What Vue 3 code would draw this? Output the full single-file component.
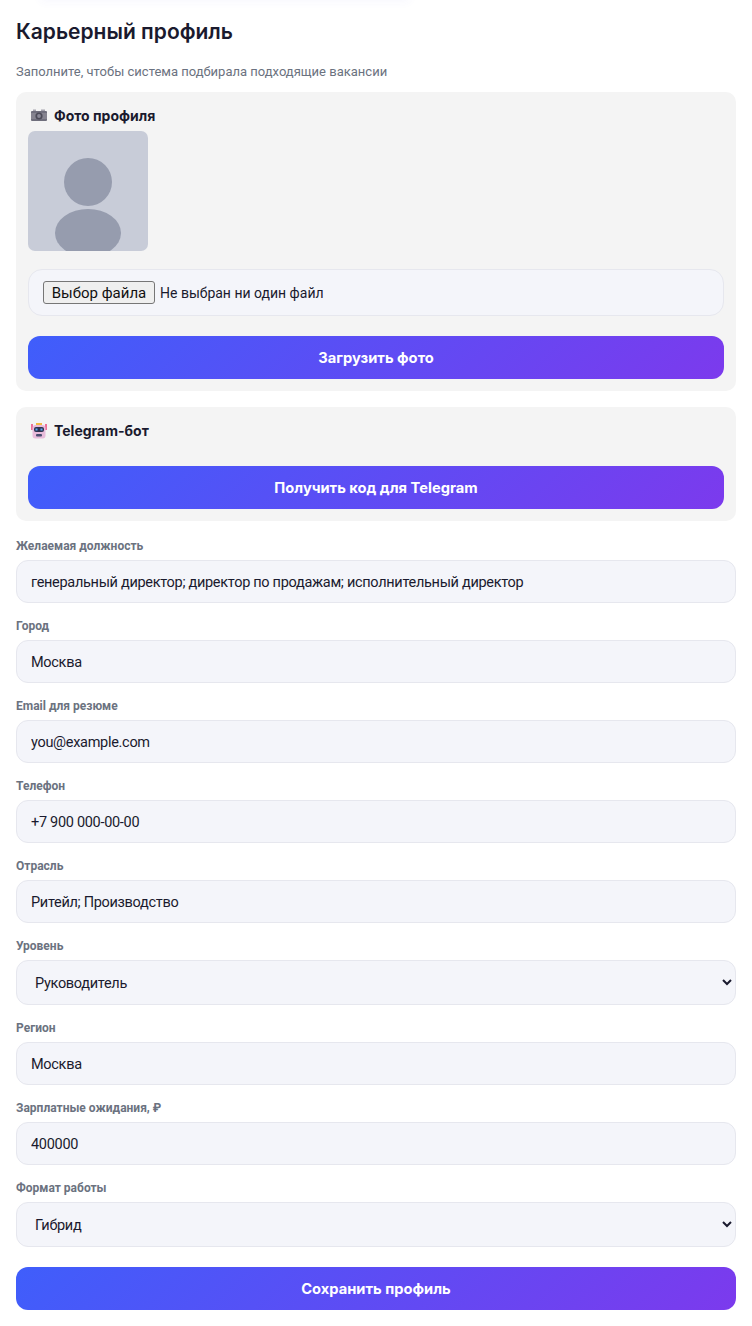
<script setup>
const fields = [
  { label: 'Желаемая должность', value: 'генеральный директор; директор по продажам; исполнительный директор' },
  { label: 'Город', value: 'Москва' },
  { label: 'Email для резюме', value: 'you@example.com' },
  { label: 'Телефон', value: '+7 900 000-00-00' },
  { label: 'Отрасль', value: 'Ритейл; Производство' },
  { label: 'Уровень', value: 'Руководитель', select: true },
  { label: 'Регион', value: 'Москва' },
  { label: 'Зарплатные ожидания, ₽', value: '400000' },
  { label: 'Формат работы', value: 'Гибрид', select: true }
]
</script>

<template>
  <main class="profile">
    <div class="top-shadow"></div>
    <h2>Карьерный профиль</h2>
    <p class="hint">Заполните, чтобы система подбирала подходящие вакансии</p>

    <section class="panel photo-panel">
      <h3>
        <svg class="icon" viewBox="0 0 16 16">
          <rect x="2" y="1.5" width="3" height="2" fill="#a5a3ae" />
          <rect x="10" y="1.5" width="4" height="2" fill="#a5a3ae" />
          <rect x="0" y="3" width="16" height="10" rx="1" fill="#6f6e7c" />
          <rect x="0" y="5" width="16" height="6" fill="#85838f" />
          <circle cx="8" cy="8" r="3.6" fill="#4c4b58" />
          <circle cx="8" cy="8" r="1.9" fill="#8a8896" />
        </svg>
        Фото профиля
      </h3>
      <svg class="avatar" viewBox="0 0 120 120">
        <rect width="120" height="120" fill="#c8ccd8" />
        <circle cx="60" cy="51" r="24" fill="#969cae" />
        <ellipse cx="60" cy="102" rx="33" ry="24" fill="#969cae" />
      </svg>
      <div class="file-wrap">
        <button type="button" class="file-btn">Выбор файла</button>
        <span>Не выбран ни один файл</span>
      </div>
      <button type="button" class="primary">Загрузить фото</button>
    </section>

    <section class="panel tg-panel">
      <h3>
        <svg class="icon" viewBox="0 0 16 16">
          <rect x="0" y="1" width="2" height="6" fill="#ee6f98" />
          <rect x="14" y="1" width="2" height="6" fill="#ee6f98" />
          <rect x="5" y="0" width="6" height="2" fill="#f5b942" />
          <rect x="1.5" y="2" width="13" height="13.5" rx="3" fill="#e8bcdb" />
          <rect x="3" y="4" width="10" height="5" rx="2" fill="#2f3350" />
          <rect x="4.5" y="5.5" width="2" height="2" fill="#5aa9f0" />
          <rect x="9.5" y="5.5" width="2" height="2" fill="#5aa9f0" />
          <rect x="5" y="11" width="6" height="2.5" rx="1" fill="#4a4d70" />
        </svg>
        Telegram-бот
      </h3>
      <button type="button" class="primary">Получить код для Telegram</button>
    </section>

    <div v-for="f in fields" :key="f.label" class="field">
      <label>{{ f.label }}</label>
      <select v-if="f.select"><option>{{ f.value }}</option></select>
      <input v-else type="text" :value="f.value" />
    </div>

    <button type="button" class="primary save">Сохранить профиль</button>
  </main>
</template>

<style>
html, body { background: #fff; }
</style>

<style scoped>
.profile {
  position: relative;
  box-sizing: border-box;
  width: 752px;
  height: 1326px;
  padding: 16px 16px 0;
  font-family: "Roboto", "Noto Sans", sans-serif;
  color: #1a1a2e;
  overflow: hidden;
}
.top-shadow {
  position: absolute;
  top: -12px;
  left: 40px;
  width: 370px;
  height: 12px;
  box-shadow: 0 2px 10px rgba(70, 80, 220, 0.04);
}
h2 {
  margin: 0;
  font-family: "Inter", sans-serif;
  font-size: 21px;
  line-height: 32px;
  font-weight: 600;
  color: #1a1a2e;
}
.hint {
  margin: 15px 0 11px;
  font-size: 13px;
  line-height: 18px;
  color: #6b7280;
}
.panel {
  background: #f4f4f4;
  border-radius: 10px;
  padding: 12px;
  margin-bottom: 16px;
}
h3 {
  display: flex;
  align-items: center;
  gap: 7px;
  margin: 0 0 0 3px;
  font-family: "Inter", sans-serif;
  font-size: 14px;
  line-height: 24px;
  font-weight: 700;
  color: #1a1a2e;
}
.icon { width: 16px; height: 16px; flex: none; }
.avatar { display: block; width: 120px; height: 120px; border-radius: 7px; margin-top: 3px; }
.file-wrap {
  box-sizing: border-box;
  display: flex;
  align-items: center;
  gap: 5px;
  height: 47px;
  margin: 18px 0 20px;
  padding: 0 14px;
  background: #f4f5fa;
  border: 1px solid #e6e7ee;
  border-radius: 14px;
  font-size: 14px;
}
.file-btn {
  box-sizing: border-box;
  width: 112px;
  height: 23px;
  padding: 0;
  border: 1px solid #767676;
  border-radius: 3px;
  background: #efefef;
  color: #111;
  font-family: inherit;
  font-size: 15px;
}
.primary {
  display: block;
  width: 100%;
  height: 43px;
  border: 0;
  border-radius: 12px;
  background: linear-gradient(135deg, #3f5efb, #7c3aed);
  color: #fff;
  font-family: "Inter", sans-serif;
  font-size: 14.7px;
  font-weight: 700;
}
.tg-panel .primary { margin-top: 23px; }
.tg-panel { margin-bottom: 15px; }
.field { margin-bottom: 13px; }
label {
  display: block;
  font-size: 12px;
  line-height: 20px;
  font-weight: 700;
  color: #6b7280;
  margin-bottom: 4px;
}
input[type="text"], select {
  box-sizing: border-box;
  display: block;
  width: 100%;
  height: 43px;
  padding: 1px 14px 0;
  border: 1px solid #e6e7ee;
  border-radius: 12px;
  background: #f4f5fa;
  font-family: inherit;
  font-size: 14.5px;
  letter-spacing: -0.3px;
  color: #1a1a2e;
}
select { height: 45px; }
.save { margin-top: 20px; }
</style>
